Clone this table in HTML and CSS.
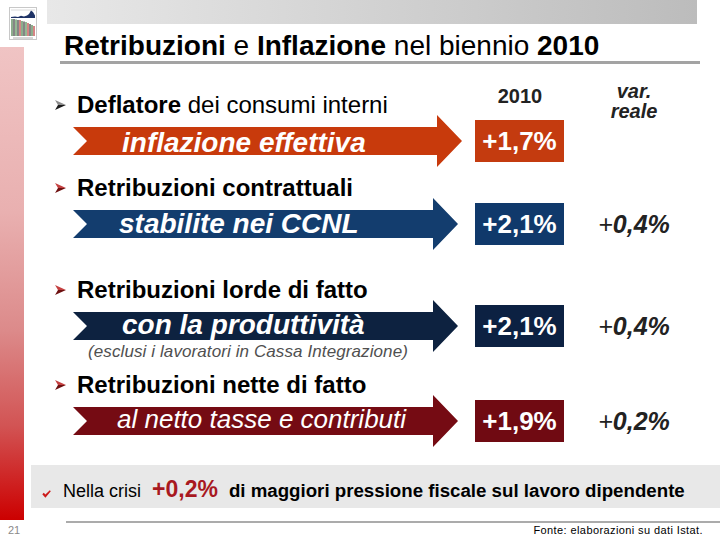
FILE: index.html
```html
<!DOCTYPE html>
<html lang="it">
<head>
<meta charset="utf-8">
<title>Retribuzioni e Inflazione nel biennio 2010</title>
<link rel="stylesheet" href="styles.css">
</head>
<body>
<div class="slide">
  <div class="side">
    <div class="logo-cell">
      <svg class="logo" viewBox="0 0 28 33" width="28" height="33">
        <rect x="0.5" y="0.5" width="27" height="32" fill="#fff" stroke="#c8c8c8"/>
        <line x1="2" y1="3" x2="26" y2="3" stroke="#d0d0d0" stroke-width="0.8"/>
        <path d="M2 10 L6 9.5 L9 10 L12 8.8 L15 9.4 L18 8.6 L20 7 L22 3.5 L24 5 L26 8.5 L26 11 L2 11 Z" fill="#1f3366"/>
        <g stroke-width="1.1">
          <line x1="3" y1="12" x2="3" y2="29" stroke="#2e6b2e"/>
          <line x1="5" y1="12" x2="5" y2="29" stroke="#222"/>
          <line x1="7" y1="12.5" x2="7" y2="29" stroke="#3d7f3d"/>
          <line x1="9" y1="13" x2="9" y2="29" stroke="#222"/>
          <line x1="11" y1="13" x2="11" y2="29" stroke="#b32020"/>
          <line x1="13" y1="14" x2="13" y2="29" stroke="#2e6b2e"/>
          <line x1="15" y1="14.5" x2="15" y2="29" stroke="#222"/>
          <line x1="17" y1="15" x2="17" y2="29" stroke="#3d7f3d"/>
          <line x1="19" y1="16" x2="19" y2="29" stroke="#b32020"/>
          <line x1="21" y1="17" x2="21" y2="29" stroke="#222"/>
          <line x1="23" y1="18" x2="23" y2="29" stroke="#2e6b2e"/>
          <line x1="25" y1="19" x2="25" y2="29" stroke="#b32020"/>
        </g>
        <line x1="4" y1="31" x2="24" y2="31" stroke="#9a9a9a" stroke-width="0.8"/>
      </svg>
    </div>
    <div class="redbar"></div>
    <div class="pnum">21</div>
  </div>

  <div class="main">
    <div class="topbar"></div>
    <h1 class="title"><b>Retribuzioni</b> e <b>Inflazione</b> nel biennio <b>2010</b></h1>

    <div class="row head">
      <p class="bullet">
        <svg class="ico" viewBox="0 0 11 10" width="11" height="10"><path d="M0 0 L11 5 L3 5 Z" fill="#8c8c8c"/><path d="M0 10 L11 5 L3 5 Z" fill="#1c1c1c"/></svg>
        <span><b>Deflatore</b> <span class="reg">dei consumi interni</span></span>
      </p>
      <div class="year">2010</div>
      <div class="varh">var.<br>reale</div>
    </div>
    <div class="row arow">
      <div class="cell"><div class="arrow a1"><span>inflazione effettiva</span></div></div>
      <div class="box b1">+1,7%</div>
    </div>

    <p class="bullet b-2">
      <svg class="ico" viewBox="0 0 11 10" width="11" height="10"><path d="M0 0 L11 5 L3 5 Z" fill="#c44040"/><path d="M0 10 L11 5 L3 5 Z" fill="#6e1010"/></svg>
      <span>Retribuzioni contrattuali</span>
    </p>
    <div class="row arow">
      <div class="cell"><div class="arrow a2"><span>stabilite nei CCNL</span></div></div>
      <div class="box b2">+2,1%</div>
      <div class="varv"><span class="plus">+</span>0,4%</div>
    </div>

    <p class="bullet b-3">
      <svg class="ico" viewBox="0 0 11 10" width="11" height="10"><path d="M0 0 L11 5 L3 5 Z" fill="#c44040"/><path d="M0 10 L11 5 L3 5 Z" fill="#6e1010"/></svg>
      <span>Retribuzioni lorde di fatto</span>
    </p>
    <div class="row arow">
      <div class="cell"><div class="arrow a3"><span>con la produttività</span></div></div>
      <div class="box b3">+2,1%</div>
      <div class="varv"><span class="plus">+</span>0,4%</div>
    </div>
    <p class="note">(esclusi i lavoratori in Cassa Integrazione)</p>

    <p class="bullet b-4">
      <svg class="ico" viewBox="0 0 11 10" width="11" height="10"><path d="M0 0 L11 5 L3 5 Z" fill="#c44040"/><path d="M0 10 L11 5 L3 5 Z" fill="#6e1010"/></svg>
      <span>Retribuzioni nette di fatto</span>
    </p>
    <div class="row arow">
      <div class="cell"><div class="arrow a4"><span>al netto tasse e contributi</span></div></div>
      <div class="box b4">+1,9%</div>
      <div class="varv"><span class="plus">+</span>0,2%</div>
    </div>

    <div class="band">
      <svg class="check" viewBox="0 0 9 8" width="9" height="8"><path d="M0.3 4.2 L1.8 2.8 L3.4 4.6 L7.8 0.3 L8.8 1.3 L3.4 7.8 Z" fill="#cc1a1a"/></svg><span class="crisi">Nella crisi</span><span class="pct">+0,2%</span><span class="strong">di maggiori pressione fiscale sul lavoro dipendente</span>
    </div>

    <div class="foot">Fonte: elaborazioni su dati Istat.</div>
  </div>
</div>
</body>
</html>
```

FILE: styles.css
```css
* { box-sizing: border-box; margin: 0; padding: 0; }
html, body { width: 720px; height: 540px; overflow: hidden; background: #fff; }
body { font-family: "Liberation Sans", Arial, sans-serif; color: #000; }

.slide { display: flex; width: 720px; height: 540px; }

/* left column */
.side { width: 24px; flex: none; display: flex; flex-direction: column; }
.logo-cell { height: 47px; padding: 7px 0 0 9px; }
.logo { display: block; }
.redbar {
  height: 473px;
  background: linear-gradient(to bottom, #f0c4c4 0%, #e9b0b0 35%, #dc8a8a 60%, #d25454 80%, #cc0000 100%);
}
.pnum { height: 20px; padding: 4px 0 0 8px; font-size: 11px; line-height: 12px; color: #8a8a8a; }

/* main column */
.main { width: 696px; flex: none; display: flex; flex-direction: column; }
.topbar {
  height: 24px; margin: 0 23px;
  background: linear-gradient(to right, #e8e8e8, #bcbcbc);
}
.title {
  margin: 7px 20px 0 36px; padding-left: 4px;
  height: 33px; line-height: 30px;
  font-size: 28px; font-weight: normal; white-space: nowrap;
  border-bottom: 3px solid #a3a3a3;
}

.row { display: flex; }
.head { height: 51px; align-items: flex-start; }

.bullet {
  width: 446px; height: 20px; padding-left: 31px;
  display: flex; align-items: center; gap: 11px;
  font-size: 24px; line-height: 20px; font-weight: bold; white-space: nowrap;
}
.bullet .reg { font-weight: normal; }
.ico { flex: none; display: block; }
.head .bullet { margin-top: 31px; }
.b-2 { margin-top: 11px; }
.b-3 { margin-top: 30px; }
.b-4 { margin-top: 15px; }

.year {
  width: 100px; margin-top: 22px; text-align: center;
  font-size: 20px; line-height: 20px; font-weight: bold; color: #222;
}
.varh {
  width: 128px; margin-top: 17px; text-align: center;
  font-size: 20px; line-height: 20px; font-weight: bold; font-style: italic; color: #222;
}

.arow { height: 52px; align-items: center; }
.cell { width: 446px; height: 52px; padding-left: 49px; }
.arrow {
  height: 52px; width: 385px; color: #fff;
  clip-path: polygon(0 12px, calc(100% - 25px) 12px, calc(100% - 25px) 0, 100% 50%, calc(100% - 25px) 100%, calc(100% - 25px) calc(100% - 12px), 0 calc(100% - 12px), 14px 50%);
  font-size: 28px; font-weight: bold; font-style: italic; white-space: nowrap;
}
.arrow span { display: block; line-height: 1; }
.a1 { width: 389px; background: #c83a0c; padding: 14px 0 0 49px; }
.a2 { background: #133d6e; padding: 12px 0 0 46px; }
.a3 { background: #0d2240; padding: 11px 0 0 49px; }
.a4 { background: #750b13; padding: 11px 0 0 44px; font-size: 26px; font-weight: normal; }

.box {
  width: 89px; height: 42px; margin-left: 5px; flex: none;
  display: flex; align-items: center; justify-content: center;
  color: #fff; font-size: 26px; font-weight: bold;
}
.b1 { background: #c43b0f; }
.b2 { background: #10396b; }
.b3 { background: #0c2142; }
.b4 { background: #700a12; }

.varv {
  width: 140px; text-align: center;
  font-size: 25px; font-weight: bold; font-style: italic; color: #222;
}
.plus { font-weight: normal; }

.note {
  margin-top: -9px; padding-left: 64px;
  font-size: 17px; line-height: 17px; font-style: italic; color: #505050;
  letter-spacing: 0.1px; white-space: nowrap;
}

.band {
  margin: 18px 0 0 7px; height: 43px; padding: 5px 0 0 11px;
  background: #e8e8e8; line-height: 38px; white-space: nowrap;
}
.check { display: inline-block; vertical-align: -1px; margin-right: 12px; }
.crisi { font-size: 18px; }
.pct { font-size: 23px; font-weight: bold; color: #a8191f; margin: 0 11px; }
.strong { font-size: 18.7px; font-weight: bold; }

.foot {
  margin-top: auto; margin-left: 42px; height: 19px;
  border-top: 2px solid #ababab;
  padding-right: 17px; text-align: right;
  font-size: 11px; line-height: 15px; letter-spacing: 0.4px; color: #000;
}
```
